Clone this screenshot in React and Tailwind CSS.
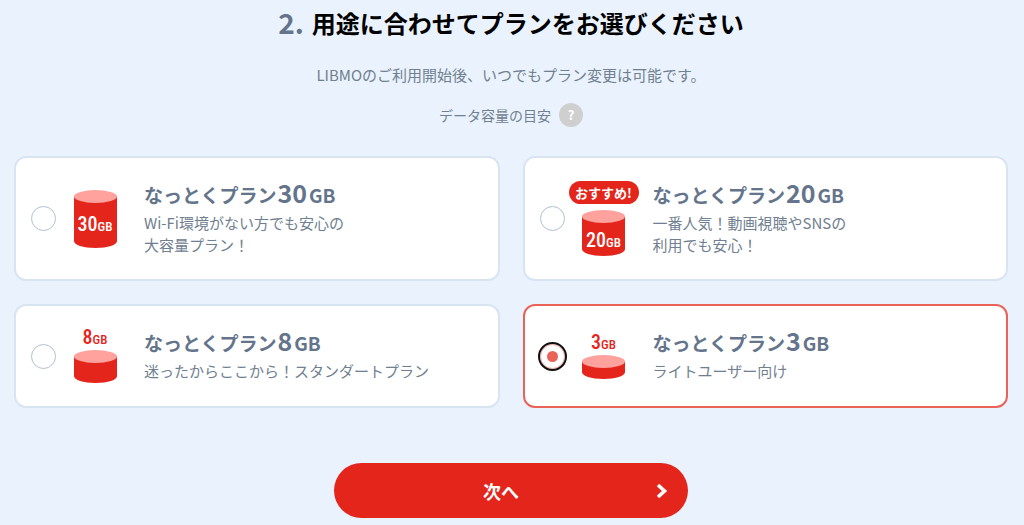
import { useState } from "react"
import clsx from "clsx"

const plans = [
	{
		id: "30",
		capacity: "30",
		lines: ["Wi-Fi環境がない方でも安心の", "大容量プラン！"],
		bodyHeight: 39,
		labelPosition: "bottom-4",
	},
	{
		id: "20",
		capacity: "20",
		lines: ["一番人気！動画視聴やSNSの", "利用でも安心！"],
		bodyHeight: 27,
		labelPosition: "bottom-2",
		badge: "おすすめ!",
	},
	{
		id: "8",
		capacity: "8",
		lines: ["迷ったからここから！スタンダートプラン"],
		bodyHeight: 14,
	},
	{
		id: "3",
		capacity: "3",
		lines: ["ライトユーザー向け"],
		bodyHeight: 5,
	},
]

function CapacityLabel({ capacity, className }) {
	return (
		<span
			className={clsx(
				"flex h-4 items-baseline justify-center font-['Roboto_Condensed','Liberation_Sans_Narrow','Liberation_Sans',sans-serif] text-xl leading-4 font-medium",
				className,
			)}
		>
			{capacity}
			<span className="text-[13px] leading-4">GB</span>
		</span>
	)
}

function Cylinder({ bodyHeight }) {
	const height = bodyHeight + 19
	const bottom = height - 7

	return (
		<svg
			className="block"
			width="43"
			height={height}
			viewBox={`0 0 43 ${height}`}
			aria-hidden="true"
		>
			<path
				d={`M0 6.5V${bottom}C0 ${bottom + 4} 9 ${bottom + 7} 21.5 ${bottom + 7}S43 ${bottom + 4} 43 ${bottom}V6.5Z`}
				fill="#e4251b"
			/>
			<ellipse cx="21.5" cy="6.5" rx="21.5" ry="6.5" fill="#ffa29e" />
		</svg>
	)
}

function PlanImage({ plan }) {
	return (
		<div className="flex w-[70px] shrink-0 flex-col items-center">
			{plan.badge && (
				<span className="mb-[6px] flex h-[23px] w-full items-center justify-center rounded-full bg-[#e4251b] text-[13px] font-bold whitespace-nowrap text-white">
					{plan.badge}
				</span>
			)}
			{!plan.labelPosition && (
				<CapacityLabel
					capacity={plan.capacity}
					className="mb-[5px] text-[#e4251b]"
				/>
			)}
			<div className="relative">
				<Cylinder bodyHeight={plan.bodyHeight} />
				{plan.labelPosition && (
					<CapacityLabel
						capacity={plan.capacity}
						className={clsx(
							"absolute inset-x-0 whitespace-nowrap text-white",
							plan.labelPosition,
						)}
					/>
				)}
			</div>
		</div>
	)
}

function PlanCard({ plan, checked, onChange }) {
	return (
		<label
			className={clsx(
				"flex cursor-pointer items-center rounded-xl border-2 bg-white px-[15px] py-[23px]",
				checked ? "border-[#eb6258]" : "border-[#d9e4f2]",
			)}
		>
			<input
				type="radio"
				name="plan"
				value={plan.id}
				checked={checked}
				onChange={onChange}
				className="mr-1 grid size-[25px] shrink-0 appearance-none place-content-center rounded-full border border-[#b3bfd1] bg-white before:size-[11px] before:rounded-full checked:border-[#f0a8a4] checked:outline-2 checked:outline-[#101010] checked:before:bg-[#eb6258]"
			/>
			<PlanImage plan={plan} />
			<div className="ml-[14px]">
				<div className="mb-[7px] flex items-baseline text-[19px] leading-5 font-bold">
					なっとくプラン
					<span className="mr-[2px] ml-px text-[25px] leading-5">
						{plan.capacity}
					</span>
					GB
				</div>
				{plan.lines.map((line) => (
					<p key={line} className="text-[15px] leading-[22px] text-[#708090]">
						{line}
					</p>
				))}
			</div>
		</label>
	)
}

export default function App() {
	const [selected, setSelected] = useState("3")

	return (
		<main className="min-h-screen bg-[#eaf3fd] pr-4 pb-[7px] pl-[14px] font-['Noto_Sans_CJK_JP',sans-serif] text-[#64748b]">
			<h1 className="flex h-[46px] items-center justify-center gap-2 text-2xl font-bold text-black">
				<span className="text-[28px] text-[#64748b]">2.</span>
				用途に合わせてプランをお選びください
			</h1>
			<p className="mt-[17px] text-center text-[15px] leading-6 text-[#708090]">
				LIBMOのご利用開始後、いつでもプラン変更は可能です。
			</p>
			<div className="mt-4 flex items-center justify-center gap-2 text-sm leading-6 text-[#708090]">
				データ容量の目安
				<button
					type="button"
					aria-label="データ容量の目安について"
					className="size-6 rounded-full bg-[#cfcfcf] text-[13px] font-bold text-white"
				>
					?
				</button>
			</div>

			<div className="mt-[29px] grid grid-cols-2 gap-[23px]">
				{plans.map((plan) => (
					<PlanCard
						key={plan.id}
						plan={plan}
						checked={selected === plan.id}
						onChange={() => setSelected(plan.id)}
					/>
				))}
			</div>

			<button
				type="button"
				className="relative mx-auto mt-[55px] block h-[55px] w-[354px] rounded-full bg-[#e4251b] pr-5 text-lg font-bold text-white"
			>
				次へ
				<svg
					className="absolute top-5 right-5"
					width="12"
					height="16"
					viewBox="0 0 12 16"
					fill="none"
					stroke="currentColor"
					strokeWidth="3.6"
					aria-hidden="true"
				>
					<path d="M2 2l6.5 6L2 14" />
				</svg>
			</button>
		</main>
	)
}
